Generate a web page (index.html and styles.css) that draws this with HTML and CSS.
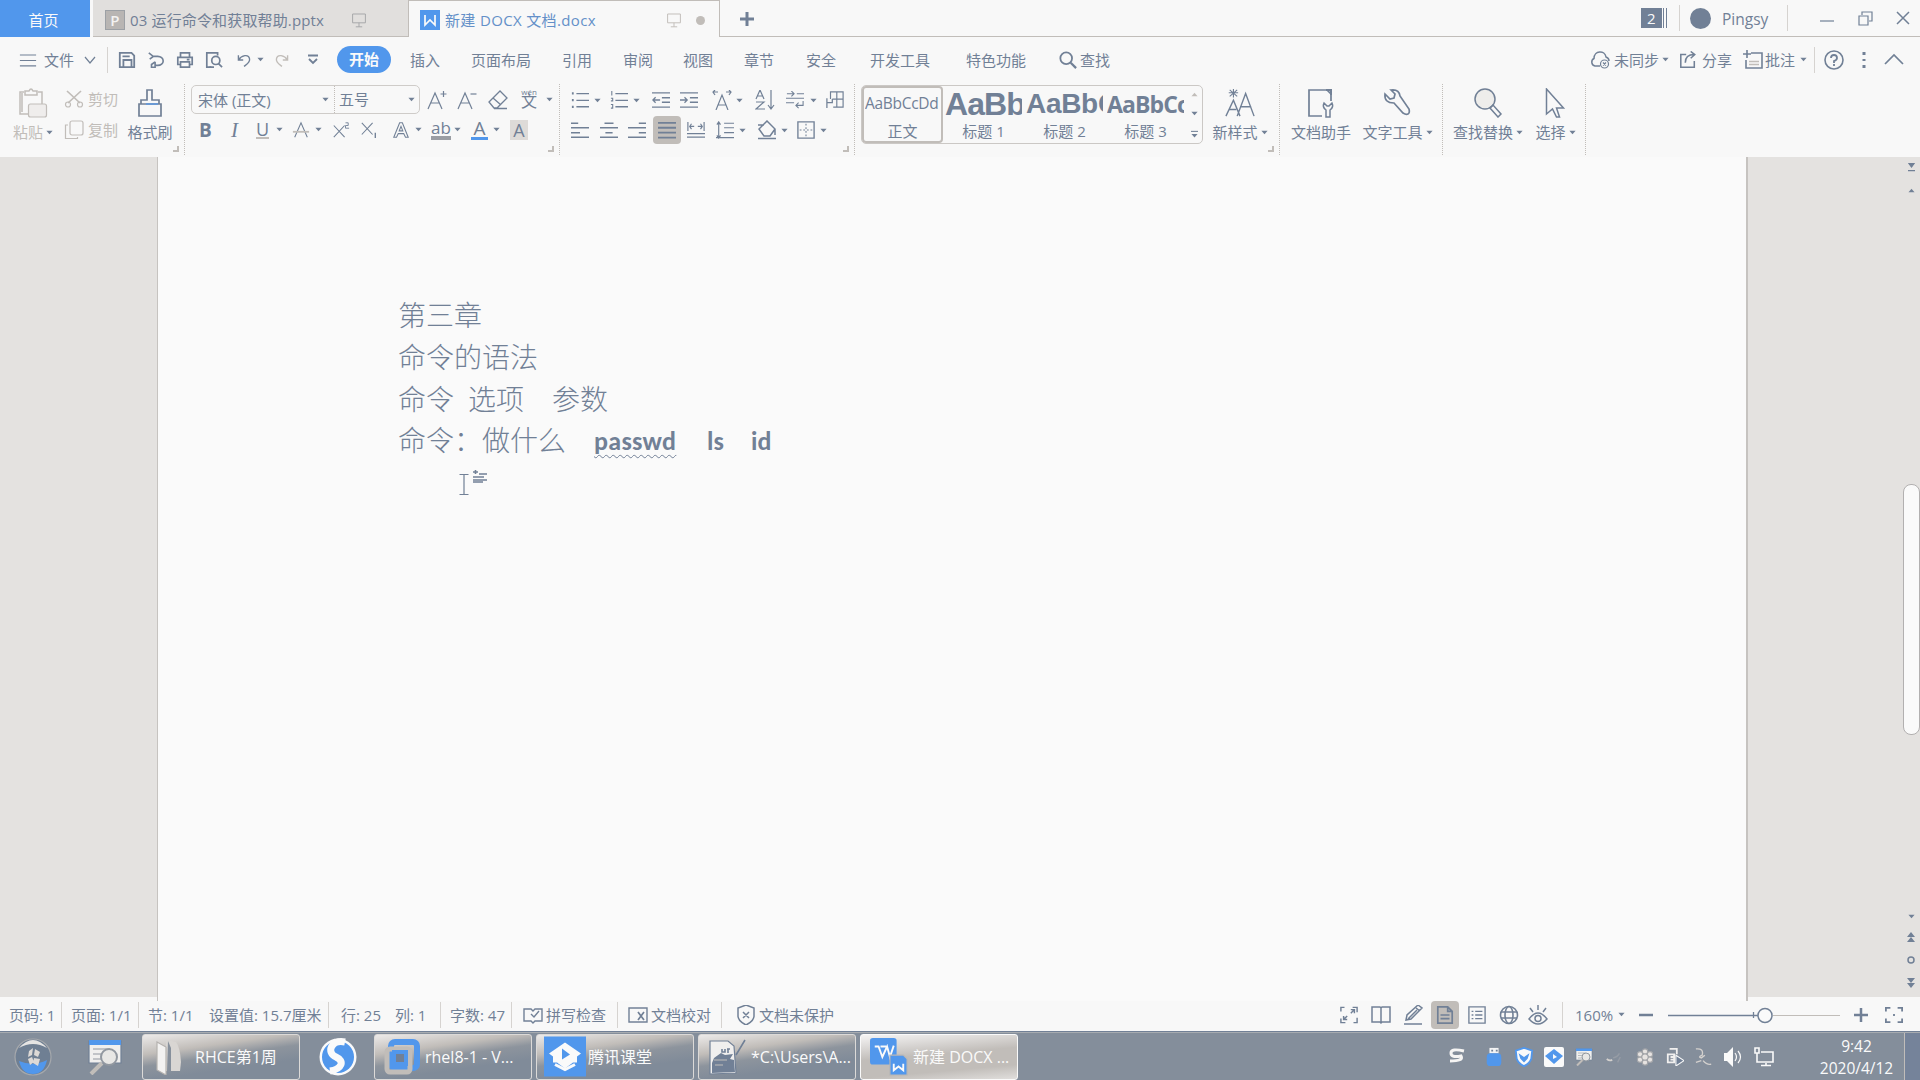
FILE: index.html
```html
<!DOCTYPE html>
<html lang="zh-CN">
<head>
<meta charset="utf-8">
<title>新建 DOCX 文档.docx</title>
<link rel="stylesheet" href="styles.css">
</head>
<body>
<svg class="defs" aria-hidden="true">
  <symbol id="caret" viewBox="0 0 8 5"><path d="M.5.5h7L4 4.5z" fill="currentColor" stroke="none"/></symbol>
  <symbol id="up" viewBox="0 0 8 5"><path d="M.5 4.5h7L4 .5z" fill="currentColor" stroke="none"/></symbol>
  <symbol id="monitor" viewBox="0 0 20 20"><path d="M2 2.500h16v11H2zM10 13.500v5M6 18.500h8"/></symbol>
  <symbol id="menu" viewBox="0 0 20 20"><path d="M1 4.500h18M1 10.500h18M1 16.500h18"/></symbol>
  <symbol id="chev" viewBox="0 0 12 8"><path d="M1 1l5 6 5-6"/></symbol>
  <symbol id="save" viewBox="0 0 20 20"><path d="M2 2h13l3 3v13H2zM6 18v-8h9v8M5 6h8" stroke-width="2"/></symbol>
  <symbol id="pdf" viewBox="0 0 20 20"><path d="M2 2l5 4-4 3M6 6h6a6 5 0 0 1 0 10H9v-4M9 12l-4 3v3h4v-3" stroke-width="1.800"/></symbol>
  <symbol id="print" viewBox="0 0 20 20"><path d="M5 7V2h10v5M5 15H2V7h16v8h-3M5 12h10v6H5zM12 9.500h3" stroke-width="1.900"/></symbol>
  <symbol id="preview" viewBox="0 0 20 20"><path d="M7 18H2V2h12v3" stroke-width="1.900"/><circle cx="12" cy="10.500" r="4.500" stroke-width="1.900"/><path d="M15 14l4 4M5 18h5" stroke-width="1.900"/></symbol>
  <symbol id="undo" viewBox="0 0 18 20"><path d="M2 4v6h6M2 10C6 4 15 2 16 9c.5 4-3 6-7 9" stroke-width="1.700"/></symbol>
  <symbol id="redo" viewBox="0 0 18 20"><path d="M16 4v6h-6M16 10C12 4 3 2 2 9c-.5 4 3 6 7 9" stroke-width="1.700"/></symbol>
  <symbol id="more" viewBox="0 0 10 12"><path d="M0 1.500h10M1 5l4 4 4-4" stroke-width="1.800"/></symbol>
  <symbol id="search" viewBox="0 0 20 20"><circle cx="8" cy="8" r="6.500" stroke-width="2"/><path d="M13 13l6 6" stroke-width="2.500"/></symbol>
  <symbol id="cloud" viewBox="0 0 20 20"><path d="M10 16H5a4 4 0 0 1-1-7.500C4 0 15 0 16 7q3 1 3 4" stroke-width="1.500"/><circle cx="14.500" cy="14" r="4"/><path d="M13 12.500l3 3m0-3l-3 3"/></symbol>
  <symbol id="share" viewBox="0 0 20 20"><path d="M8 4H2v14h15v-7M7 13c0-6 3-9 10-9M13 .5L17.500 4 13 8" stroke-width="1.700"/></symbol>
  <symbol id="note" viewBox="0 0 20 20"><path d="M8 3h11v15H3v-8M4 0v8M0 4h8" stroke-width="1.600"/><path d="M6 11.500h10M6 14.500h10" stroke="#c1bdb9" stroke-width="1.500"/></symbol>
  <symbol id="help" viewBox="0 0 20 20"><circle cx="10" cy="10" r="9" stroke-width="1.600"/><path d="M7 8q0-3 3-3t3 3q0 2-3 3v2M10 14v2" stroke-width="1.800"/></symbol>
  <symbol id="paste" viewBox="0 0 30 30"><path d="M10 26H2V4h4M20 4h4v12M7 3h4q2-4 4 0h4v4H7z" stroke-width="1.500"/><path d="M4 5v19" stroke-width="1.500"/><rect x="10.500" y="16" width="18" height="13" rx="2" fill="#efedec"/></symbol>
  <symbol id="cut" viewBox="0 0 20 20"><path d="M3 2l13 12M17 2L4 14" stroke-width="1.700"/><circle cx="4" cy="15.500" r="2.500"/><circle cx="16" cy="15.500" r="2.500"/></symbol>
  <symbol id="copy" viewBox="0 0 20 20"><rect x="6" y="1" width="13" height="14" rx="2"/><path d="M4 5H1.500v13.500h12V17"/></symbol>
  <symbol id="brush" viewBox="0 0 26 30"><path d="M2 16h22v12H2zM4 16v-4h6V2h5v10h7v4" stroke-width="1.700"/><path d="M9 16h12" stroke="#5197ec"/></symbol>
  <symbol id="corner" viewBox="0 0 6 6"><path d="M5 0v5H0" stroke="#c1bdb9" stroke-width="2"/></symbol>
  <symbol id="Aplus" viewBox="0 0 20 20"><path d="M1 19L8 3l7 16M4 13h8"/><path d="M13.500 4h6M16.500 1v6"/></symbol>
  <symbol id="Aminus" viewBox="0 0 20 20"><path d="M1 19L8 3l7 16M4 13h8"/><path d="M13.500 4h6"/></symbol>
  <symbol id="eraser" viewBox="0 0 20 20"><path d="M1 12L12 1l7 7-10 10H6zM5 8l8 7M6 18.500h13" stroke-width="1.300"/></symbol>
  <symbol id="strikeA" viewBox="0 0 18 20"><path d="M2 18L9 2l7 16"/><path d="M0 12h18" stroke="#c1bdb9" stroke-width="2"/></symbol>
  <symbol id="xsup" viewBox="0 0 18 20"><path d="M1 5l12 13M13 5L1 18"/><path d="M14 2h3v3h-3v3h4" stroke-width="1"/></symbol>
  <symbol id="xsub" viewBox="0 0 18 20"><path d="M1 2l12 13M13 2L1 15"/><path d="M16 13v6" stroke-width="1.500"/></symbol>
  <symbol id="outA" viewBox="0 0 18 20"><path d="M1 18L7.500 2h3L17 18h-3l-2-4H6l-2 4zM7 11h4L9 6z"/></symbol>
  <symbol id="bul" viewBox="0 0 20 20"><path d="M1 2.500h2M1 10h2M1 17.500h2" stroke-width="2.500"/><path d="M6 3h14M6 10.500h14M6 17.500h14" stroke-width="1.400"/></symbol>
  <symbol id="num" viewBox="0 0 20 20"><path d="M2 0v5M1 8h2v3H1M1 15h2v4H1"/><path d="M6 3h14M6 10.500h14M6 17.500h14" stroke-width="1.400"/></symbol>
  <symbol id="outd" viewBox="0 0 20 20"><path d="M0 2h20M11 7.500h9M11 12.500h9M0 18h20M1 10h8M4 7l-3 3 3 3" stroke-width="1.400"/></symbol>
  <symbol id="ind" viewBox="0 0 20 20"><path d="M0 2h20M11 7.500h9M11 12.500h9M0 18h20M0 10h8M5 7l3 3-3 3" stroke-width="1.400"/></symbol>
  <symbol id="Aw" viewBox="0 0 20 20"><path d="M4 20l6-15 6 15M6 15h8M6 2H1m2-2L1 2l2 3M14 2h5m-2-2l2 2-2 3"/></symbol>
  <symbol id="az" viewBox="0 0 20 20"><path d="M1 9l4-9 4 9M2 6h6M1 12h8l-8 7h9M16 0v19M13 15l3 4 3-4"/></symbol>
  <symbol id="wrap" viewBox="0 0 20 20"><path d="M1 3h8M6 0l3 3-3 3M12 3h8M0 8h20M0 13h9M12 16h7v-5M14 13l-3 3 3 3" stroke-width="1.200"/></symbol>
  <symbol id="table" viewBox="0 0 20 20"><path d="M5 9V1h14v17H8M12 1v17M7 9h12" stroke-width="1.300"/><path d="M1 19V8M1 13h6V9" stroke-width="1.400"/></symbol>
  <symbol id="al" viewBox="0 0 20 20"><path d="M0 2.500h8M0 7.500h20M0 13h10M0 18h20" stroke-width="1.500"/></symbol>
  <symbol id="ac" viewBox="0 0 20 20"><path d="M5 2.500h10M0 7.500h20M6 13h8M0 18h20" stroke-width="1.500"/></symbol>
  <symbol id="ar" viewBox="0 0 20 20"><path d="M12 2.500h8M0 7.500h20M12 13h8M0 18h20" stroke-width="1.500"/></symbol>
  <symbol id="aj" viewBox="0 0 20 20"><path d="M0 2h20M0 7.500h20M0 13h20M0 18.500h20" stroke-width="2"/></symbol>
  <symbol id="dist" viewBox="0 0 20 20"><path d="M1 1v10M19 1v10M3 6h5M5 3L3 6l2 3M17 6h-5M15 3l2 3-2 3M0 14h20M0 18h20" stroke-width="1.300"/></symbol>
  <symbol id="ls" viewBox="0 0 20 20"><path d="M3 1v18M1 4l2-3 2 3M1 16l2 3 2-3M9 2.500h11M9 7.500h11M9 13h11M0 18.500h20" stroke-width="1.300"/></symbol>
  <symbol id="fill" viewBox="0 0 20 20"><path d="M10 1l8 8-5 7H7L2 9zM1 5h6M1 18.500h18M18 9v6" stroke-width="1.500"/></symbol>
  <symbol id="border" viewBox="0 0 20 20"><path d="M1 1h18v18H1z" stroke-width="1.500"/><path d="M10 3v14M3 10h14" stroke-dasharray="2 2"/></symbol>
  <symbol id="newstyle" viewBox="0 0 32 30"><path d="M1 29l8-17 7 17M4 22h8M13 29L22 5l9 24M16 19h12" stroke-width="1.500"/><path d="M4 4h10M9 0v9M5 1l8 7M13 1L5 8"/></symbol>
  <symbol id="dochelp" viewBox="0 0 28 30"><path d="M15 28H2V2h18l4 4v7" stroke-width="1.700"/><path d="M19 29v-7q-4-3-2-7l3 3h2l3-3q2 4-2 7v7z" stroke-width="1.500"/><path d="M19 2h5v5" stroke-width="2"/></symbol>
  <symbol id="wrench" viewBox="0 0 28 30"><path d="M2 6l5 5 4-1 1-4-4-4q8-1 9 6l9 13q1 4-1 5t-5-1L11 15Q1 15 2 6z" stroke-width="1.700"/></symbol>
  <symbol id="find" viewBox="0 0 28 30"><circle cx="11" cy="11" r="10" fill="#eeedeb" stroke-width="1.500"/><path d="M16 20l3-3 8 9-3 3z" stroke-width="1.500"/></symbol>
  <symbol id="select" viewBox="0 0 20 30"><path d="M1.500 1v25l6-5 4 8h3l-3-9h7z" stroke-width="1.500"/></symbol>
  <symbol id="spell" viewBox="0 0 20 20"><path d="M1 4h7l2 2 2-2h7v12h-7l-2 2-2-2H1zM8 9l3 3 5-6" stroke-width="1.400"/></symbol>
  <symbol id="proof" viewBox="0 0 20 20"><path d="M10 3H1v14h9M10 3h9v14h-9" stroke-width="1.400"/><path d="M10 7l6 8M16 7l-6 8" stroke-width="1.700"/></symbol>
  <symbol id="shield" viewBox="0 0 20 20"><path d="M10 0l8 3v8q0 5-8 9-8-4-8-9V3zM7 7l6 6M13 7l-6 6" stroke-width="1.500"/></symbol>
  <symbol id="expand" viewBox="0 0 20 20"><path d="M1 6V1.500h4M14 1.500h5V7M19 13v5.500h-4M6 18.500H1V14M4 15l4-4M12 8l4-4M12 4h4v4M4 11v4h4" stroke-width="1.600"/></symbol>
  <symbol id="book" viewBox="0 0 20 20"><path d="M1 2h8l1 1 1-1h8v15h-8l-1 1-1-1H1zM10 3v15" stroke-width="1.500"/></symbol>
  <symbol id="pencil" viewBox="0 0 20 20"><path d="M3 15l1-5L15 0l4 3L8 14zM13 3l4 3M1 19h18M5 14l9-9" stroke-width="1.500"/></symbol>
  <symbol id="page" viewBox="0 0 20 20"><path d="M2 1h11l5 5v13H2zM13 1v5h5M5 10h10M5 14h10" stroke-width="1.900"/></symbol>
  <symbol id="list" viewBox="0 0 20 20"><path d="M1 1h18v18H1zM4 6h2M8 6h8M4 10h2M8 10h8M4 14h2M8 14h8" stroke-width="1.500"/></symbol>
  <symbol id="globe" viewBox="0 0 20 20"><g stroke-width="1.600"><circle cx="10" cy="10" r="8.500"/><ellipse cx="10" cy="10" rx="4" ry="8.500"/><path d="M2 7h16M2 13h16"/></g></symbol>
  <symbol id="eye" viewBox="0 0 20 20"><path d="M1 14q9-12 18 0-9 10-18 0zM10 0v5M2 3l3 4M18 3l-3 4" stroke-width="1.500"/><circle cx="10" cy="13.500" r="3" stroke-width="1.500"/></symbol>
  <symbol id="fit" viewBox="0 0 20 20"><path d="M1 6V2h5M14 2h5v4M19 14v4h-5M6 18H1v-4M9 10h2" stroke-width="2"/></symbol>
  <symbol id="wps" viewBox="0 0 20 20"><path d="M0 0h20v20H0z" fill="#5197ec" stroke="none"/><path d="M5 5v10l5-5 5 5V5" stroke="#fafafa" stroke-width="1.700"/></symbol>
  <symbol id="orb" viewBox="0 0 40 38"><circle cx="20" cy="19" r="18" fill="#6f7f93" stroke="#a5a8ac"/><path d="M6 23q14 6 28-1-3 14-14 14T6 23z" fill="#5197ec" stroke="none"/><path d="M6 10Q20-6 34 10 20 2 6 10z" fill="#e5e4e3" stroke="none"/><path d="M16 13l4-3-1 7-4 2zM22 11l5 3-2 5-4-2zM15 21l4-2 2 5-4 3zM21 20l6 1-2 7-5-3z" fill="#ddd9d6" stroke="none"/></symbol>
  <symbol id="scan" viewBox="0 0 34 36"><path d="M1 2h32v22H1z" fill="#f0efee" stroke="#718096"/><path d="M1 1h32v5H1z" fill="#5197ec" stroke="none"/><path d="M5 10h15M5 15h10M5 20h10" stroke="#9298a0"/><circle cx="21" cy="18" r="8" fill="#e8e7e5" stroke="#9298a0" stroke-width="2"/><path d="M14 24L3 35" stroke="#c1bdb9" stroke-width="4"/></symbol>
  <symbol id="folder" viewBox="0 0 28 36"><path d="M10 1l10 2q4 5 5 20l-1 9H10z" fill="#d9d6d3" stroke="none"/><path d="M1 3l9 5v28l-9-5z" fill="#f3f2f1" stroke="#b5b2af"/><path d="M12 2l3 7v23h-4z" fill="#87909c" stroke="none"/></symbol>
  <symbol id="sogou" viewBox="0 0 38 38"><circle cx="19" cy="19" r="18.500" fill="#fafafa" stroke="none"/><circle cx="19" cy="19" r="16" fill="#5197ec" stroke="none"/><path d="M26 4C12 1 7 15 17 19c9 4 6 12-6 14" stroke="#fafafa" stroke-width="7"/></symbol>
  <symbol id="vm" viewBox="0 0 36 36"><rect x="7" y="3" width="26" height="26" rx="4" stroke="#5197ec" stroke-width="6"/><rect x="3" y="10" width="23" height="23" rx="3" stroke="#c1bdb9" stroke-width="5"/><path d="M10 13h12v12H10z" fill="#718096" stroke="#5197ec" stroke-width="4"/></symbol>
  <symbol id="ke" viewBox="0 0 42 40"><path d="M0 0h42v40H0z" fill="#5197ec" stroke="none"/><path d="M21 6l16 11-4 3v6h-4l-8 6-8-6H9v-6l-4-3z" fill="#fafafa" stroke="none"/><path d="M18 12v11l8-5z" fill="#5197ec" stroke="none"/><path d="M11 28l10 5 10-5" stroke="#fafafa" stroke-width="3"/></symbol>
  <symbol id="notepad" viewBox="0 0 38 36"><path d="M2 2h18l6 5 2 27-26 1z" fill="#f0efee" stroke="#718096"/><path d="M4 24l2-5 7-5 4 2 8-1-3 5 4 1 1 12-23 1z" fill="#718096" stroke="none"/><path d="M6 21h13M7 26h8" stroke="#c1bdb9"/><path d="M37 1L28 16M14 10v3h3v-3M19 10h3M20 10v4" stroke="#718096" stroke-width="1.600"/></symbol>
  <symbol id="wpsdoc" viewBox="0 0 40 40"><rect width="28" height="28" rx="3" fill="#5197ec" stroke="none"/><path d="M5 9h4l4 11 5-11 3 11 4-12M11 9h6" stroke="#fafafa" stroke-width="2"/><path d="M21 18h14l4 4v17H21z" fill="#5197ec" stroke="#b9b7b5"/><path d="M25 27v7l5-4 5 4v-7" stroke="#fafafa" stroke-width="2"/></symbol>
  <symbol id="tS" viewBox="0 0 20 20"><path d="M17 4Q4 1 4 6t10 3q3 5-11 5" stroke="#f5f4f3" stroke-width="3"/></symbol>
  <symbol id="usb" viewBox="0 0 20 22"><path d="M5 1h10v6H5z" fill="#f4f4f4" stroke="none"/><path d="M7 3h2v2H7zM12 3h2v2h-2z" fill="#718096" stroke="none"/><rect x="2" y="7" width="16" height="14" rx="4" fill="#5197ec" stroke="none"/></symbol>
  <symbol id="tsh" viewBox="0 0 20 22"><path d="M10 1l9 3-1 9q-2 5-8 8-6-3-8-8L1 4z" fill="#fafafa" stroke="#5197ec" stroke-width="2"/><path d="M4 7l6 4 6-4-2 6-4 4-4-4z" fill="#5197ec" stroke="none"/></symbol>
  <symbol id="tke" viewBox="0 0 20 20"><rect width="20" height="20" rx="2" fill="#fafafa" stroke="none"/><path d="M10 2l9 7-9 8-9-8z" fill="#5197ec" stroke="none"/><path d="M9 7v5l4-2z" fill="#fafafa" stroke="none"/></symbol>
  <symbol id="bird" viewBox="0 0 20 20"><path d="M2 12q3 3 6 1" stroke="#d4d1ce" stroke-width="2"/><path d="M9 11q5-1 7-5M14 16l3-6" stroke="#969ca5" stroke-width="1.500"/></symbol>
  <symbol id="flower" viewBox="0 0 20 20"><g fill="#e6e3e1" stroke="#a3a5a9"><circle cx="10" cy="4" r="3"/><circle cx="15.500" cy="7" r="3"/><circle cx="15.500" cy="13" r="3"/><circle cx="10" cy="16" r="3"/><circle cx="4.500" cy="13" r="3"/><circle cx="4.500" cy="7" r="3"/><circle cx="10" cy="10" r="3.500"/></g></symbol>
  <symbol id="copyplay" viewBox="0 0 20 20"><path d="M4 1h8v6M2 7h7v9H2zM5 10h3M5 13h3" stroke="#f1f0ef" stroke-width="2"/><path d="M11 8l9 6-9 6z" fill="#718096" stroke="#fafafa"/></symbol>
  <symbol id="pointer" viewBox="0 0 20 20"><path d="M1 1q9-1 7 7-5 2-1 3l4-3M1 16l6-2M9 14q4 5 9 4" stroke="#d4d1ce" stroke-width="1.500"/></symbol>
  <symbol id="vol" viewBox="0 0 20 20"><path d="M1 6h3l6-6v20l-6-6H1z" fill="#fafafa" stroke="none"/><path d="M12 6q3 4 0 8M15 4q5 6 0 12" stroke="#fafafa"/></symbol>
  <symbol id="net" viewBox="0 0 20 20"><path d="M7 5h12v10H7M12 16v2M7 18.500h10M1 1h4v5H1zM3 6v9h4" stroke="#fafafa" stroke-width="1.600"/></symbol>
</svg>

<header class="tabs">
  <div class="home">首页</div>
  <div class="tab tab-ppt"><span class="pbox">P</span><span>03 运行命令和获取帮助.pptx</span><svg class="i16"><use href="#monitor"/></svg></div>
  <div class="tab tab-doc"><svg class="i20"><use href="#wps"/></svg><span class="blue">新建 DOCX 文档.docx</span><svg class="i16 dim"><use href="#monitor"/></svg><span class="dot"></span></div>
  <div class="titlebar">
    <svg class="plus" viewBox="0 0 16 16"><path d="M8 1v14M1 8h14" stroke-width="3"/></svg>
    <span class="count">2</span><i class="vsep"></i><span class="avatar"></span><span class="user">Pingsy</span><i class="vsep"></i>
    <svg class="i14" viewBox="0 0 14 14"><path d="M0 10h14"/></svg>
    <svg class="i15" viewBox="0 0 15 15"><path d="M1 5h9v9H1zM4 4V1h10v9h-3"/></svg>
    <svg class="i14" viewBox="0 0 14 14"><path d="M1 1l12 12M13 1L1 13" stroke-width="1.500"/></svg>
  </div>
</header>

<nav class="menu">
  <svg class="i18"><use href="#menu"/></svg><span>文件</span><svg class="chev"><use href="#chev"/></svg><i class="vsep"></i>
  <svg class="i18"><use href="#save"/></svg><svg class="i18"><use href="#pdf"/></svg><svg class="i18"><use href="#print"/></svg><svg class="i18"><use href="#preview"/></svg><svg class="i16"><use href="#undo"/></svg><svg class="caret"><use href="#caret"/></svg><svg class="i16 dim"><use href="#redo"/></svg><svg class="more"><use href="#more"/></svg>
  <span class="pill">开始</span><span>插入</span><span>页面布局</span><span>引用</span><span>审阅</span><span>视图</span><span>章节</span><span>安全</span><span>开发工具</span><span>特色功能</span><svg class="i18"><use href="#search"/></svg><span>查找</span>
  <svg class="i20"><use href="#cloud"/></svg><span>未同步</span><svg class="caret"><use href="#caret"/></svg><svg class="i18"><use href="#share"/></svg><span>分享</span><svg class="i20"><use href="#note"/></svg><span>批注</span><svg class="caret"><use href="#caret"/></svg><i class="vsep"></i><svg class="i20"><use href="#help"/></svg>
  <svg class="dots" viewBox="0 0 4 16"><path d="M2 0v3M2 7v2M2 13v3" stroke-width="3"/></svg><svg class="i20" viewBox="0 0 20 20"><path d="M1 14l9-9 9 9" stroke-width="1.700"/></svg>
</nav>

<section class="ribbon">
  <div class="group clip">
    <div class="big dim"><svg class="i30"><use href="#paste"/></svg><span>粘贴<svg class="caret dark"><use href="#caret"/></svg></span></div>
    <div class="stack dim"><span><svg class="i20"><use href="#cut"/></svg>剪切</span><span><svg class="i20"><use href="#copy"/></svg>复制</span></div>
    <div class="big"><svg class="i30"><use href="#brush"/></svg><span>格式刷</span></div>
    <svg class="corner"><use href="#corner"/></svg>
  </div>
  <div class="group font">
    <div class="frow1">
      <div class="combo"><span>宋体 (正文)</span><svg class="caret"><use href="#caret"/></svg><span class="size">五号</span><svg class="caret"><use href="#caret"/></svg></div>
      <svg class="i20"><use href="#Aplus"/></svg><svg class="i20"><use href="#Aminus"/></svg><svg class="i20"><use href="#eraser"/></svg><span class="pinyin"><small>wén</small><span>文</span></span><svg class="caret"><use href="#caret"/></svg>
    </div>
    <div class="frow2">
      <b class="g">B</b><span class="g it">I</span><span class="g un">U</span><svg class="caret"><use href="#caret"/></svg><svg class="i18"><use href="#strikeA"/></svg><svg class="caret"><use href="#caret"/></svg><svg class="i18"><use href="#xsup"/></svg><svg class="i18"><use href="#xsub"/></svg><svg class="i18"><use href="#outA"/></svg><svg class="caret"><use href="#caret"/></svg><span class="g ab">ab</span><svg class="caret"><use href="#caret"/></svg><span class="g color">A</span><svg class="caret"><use href="#caret"/></svg><span class="g shade">A</span>
    </div>
    <svg class="corner"><use href="#corner"/></svg>
  </div>
  <div class="group para">
    <div class="prow1">
      <svg class="i18"><use href="#bul"/></svg><svg class="caret"><use href="#caret"/></svg><svg class="i18"><use href="#num"/></svg><svg class="caret"><use href="#caret"/></svg><svg class="i18"><use href="#outd"/></svg><svg class="i18"><use href="#ind"/></svg><svg class="i20"><use href="#Aw"/></svg><svg class="caret"><use href="#caret"/></svg><svg class="i20"><use href="#az"/></svg><svg class="i18"><use href="#wrap"/></svg><svg class="caret"><use href="#caret"/></svg><svg class="i18"><use href="#table"/></svg>
    </div>
    <div class="prow2">
      <svg class="i18"><use href="#al"/></svg><svg class="i18"><use href="#ac"/></svg><svg class="i18"><use href="#ar"/></svg><span class="on"><svg class="i18"><use href="#aj"/></svg></span><svg class="i18"><use href="#dist"/></svg><svg class="i18"><use href="#ls"/></svg><svg class="caret"><use href="#caret"/></svg><svg class="i20"><use href="#fill"/></svg><svg class="caret"><use href="#caret"/></svg><svg class="i18"><use href="#border"/></svg><svg class="caret"><use href="#caret"/></svg>
    </div>
    <svg class="corner"><use href="#corner"/></svg>
  </div>
  <div class="group styles">
    <div class="gallery">
      <div class="style sel"><span class="pv p0">AaBbCcDd</span><span>正文</span></div>
      <div class="style"><span class="pv p1">AaBb</span><span>标题 1</span></div>
      <div class="style"><span class="pv p2">AaBbC</span><span>标题 2</span></div>
      <div class="style"><span class="pv p3">AaBbCc</span><span>标题 3</span></div>
      <div class="scrolls"><svg class="caret dim"><use href="#up"/></svg><svg class="caret"><use href="#caret"/></svg><svg class="caret drop" viewBox="0 0 8 8"><path d="M0 1h8"/><path d="M.5 4h7L4 8z" fill="currentColor" stroke="none"/></svg></div>
    </div>
    <div class="big"><svg class="i30"><use href="#newstyle"/></svg><span>新样式<svg class="caret"><use href="#caret"/></svg></span></div>
    <svg class="corner"><use href="#corner"/></svg>
  </div>
  <div class="group tools">
    <div class="big"><svg class="i30"><use href="#dochelp"/></svg><span>文档助手</span></div>
    <div class="big"><svg class="i30"><use href="#wrench"/></svg><span>文字工具<svg class="caret"><use href="#caret"/></svg></span></div>
  </div>
  <div class="group edit">
    <div class="big"><svg class="i30"><use href="#find"/></svg><span>查找替换<svg class="caret"><use href="#caret"/></svg></span></div>
    <div class="big"><svg class="i30"><use href="#select"/></svg><span>选择<svg class="caret"><use href="#caret"/></svg></span></div>
  </div>
</section>

<main class="work">
  <article class="paper">
    <p>第三章</p>
    <p>命令的语法</p>
    <p><span class="w70">命令</span><span class="w84">选项</span>参数</p>
    <p><span class="w84">命令：</span><span class="w112">做什么</span><b class="pw">passwd</b><b class="lsw">ls</b><b>id</b></p>
    <svg class="ibeam" viewBox="0 0 30 28"><path d="M.5 5.500h9M.5 25.500h9M5 5.500v20"/><path d="M14 3h5M16.500 1v4M20 5h8M14 8h11M14 11h14M14 13h10" stroke-width="1.600"/></svg>
  </article>
  <aside class="scroll">
    <svg class="caret top1" viewBox="0 0 8 10"><path d="M1 0h6L4 4zM0 8h8" fill="currentColor"/></svg>
    <svg class="caret top2"><use href="#up"/></svg>
    <div class="thumb"></div>
    <svg class="caret dn"><use href="#caret"/></svg>
    <svg class="nav" viewBox="0 0 8 10"><path d="M0 5l4-5 4 5zM0 10l4-5 4 5z" fill="currentColor" stroke="none"/></svg>
    <svg class="nav" viewBox="0 0 8 10"><circle cx="4" cy="5" r="3" stroke-width="1.500"/></svg>
    <svg class="nav" viewBox="0 0 8 10"><path d="M0 0l4 5 4-5zM0 5l4 5 4-5z" fill="currentColor" stroke="none"/></svg>
  </aside>
</main>

<footer class="status">
  <span>页码: 1</span><i class="vsep"></i><span>页面: 1/1</span><i class="vsep"></i><span>节: 1/1</span><span>设置值: 15.7厘米</span><i class="vsep"></i><span>行: 25</span><span>列: 1</span><i class="vsep"></i><span>字数: 47</span><i class="vsep"></i><svg class="i20"><use href="#spell"/></svg><span>拼写检查</span><i class="vsep"></i><svg class="i20"><use href="#proof"/></svg><span>文档校对</span><i class="vsep"></i><svg class="i20"><use href="#shield"/></svg><span>文档未保护</span>
  <svg class="i18"><use href="#expand"/></svg><svg class="i20"><use href="#book"/></svg><svg class="i20"><use href="#pencil"/></svg><span class="on"><svg class="i18"><use href="#page"/></svg></span><svg class="i18"><use href="#list"/></svg><svg class="i20"><use href="#globe"/></svg><svg class="i20"><use href="#eye"/></svg><i class="vsep"></i><span>160%</span><svg class="caret"><use href="#caret"/></svg>
  <svg class="i16" viewBox="0 0 16 16"><path d="M1 8h14" stroke-width="2.500"/></svg>
  <svg class="slider" viewBox="0 0 172 20"><path d="M0 10.500h90M85.500 7v6" stroke-width="1.300"/><path d="M105 10.500h67" stroke="#c1bdb9"/><circle cx="97" cy="10.500" r="7" fill="#fafafa" stroke-width="1.500"/></svg>
  <svg class="i16" viewBox="0 0 16 16"><path d="M1 8h14M8 1v14" stroke-width="2.500"/></svg><svg class="i18"><use href="#fit"/></svg>
</footer>

<div class="taskbar">
  <svg class="s40"><use href="#orb"/></svg>
  <svg class="s36"><use href="#scan"/></svg>
  <div class="task"><svg class="s36"><use href="#folder"/></svg><span class="rhce">RHCE第1周</span></div>
  <svg class="s40"><use href="#sogou"/></svg>
  <div class="task"><svg class="s36"><use href="#vm"/></svg><span>rhel8-1 - V...</span></div>
  <div class="task ke"><svg class="s42"><use href="#ke"/></svg><span>腾讯课堂</span></div>
  <div class="task"><svg class="s38"><use href="#notepad"/></svg><span>*C:\Users\A...</span></div>
  <div class="task active"><svg class="s38"><use href="#wpsdoc"/></svg><span>新建 DOCX ...</span></div>
  <div class="tray"><svg class="i20"><use href="#tS"/></svg><svg class="i20"><use href="#usb"/></svg><svg class="i20"><use href="#tsh"/></svg><svg class="i20"><use href="#tke"/></svg><svg class="i18"><use href="#scan"/></svg><svg class="i18"><use href="#bird"/></svg><svg class="i18"><use href="#flower"/></svg><svg class="i18"><use href="#copyplay"/></svg><svg class="i18"><use href="#pointer"/></svg><svg class="i20"><use href="#vol"/></svg><svg class="i20"><use href="#net"/></svg></div>
  <div class="clock"><span>9:42</span><span>2020/4/12</span></div>
  <div class="peek"></div>
</div>
</body>
</html>
```
FILE: styles.css
```css
* { box-sizing: border-box; }
body {
  margin: 0; width: 1920px; height: 1080px; overflow: hidden;
  display: grid; grid-template-rows: 37px 43px 77px 840px 35px 48px;
  font: 15px/20px "Open Sans", "Noto Sans CJK SC", sans-serif;
  color: #718096; background: #f8f8f8; white-space: nowrap;
}
.defs { position: absolute; width: 0; height: 0; }
svg { display: block; flex: none; fill: none; stroke: currentColor; stroke-width: 1.2; }
.dim { color: #c1bdb9; }
.dark { color: #718096; }
.blue { color: #6490c8; }
.i14 { width: 14px; height: 14px; }
.i15 { width: 15px; height: 15px; }
.i16 { width: 16px; height: 16px; }
.i18 { width: 18px; height: 18px; }
.i20 { width: 20px; height: 20px; }
.i30 { width: 30px; height: 30px; }
.caret { width: 7px; height: 5px; }
.chev { width: 12px; height: 8px; }
.more { width: 10px; height: 12px; }
.drop { height: 8px; }
.dots { width: 4px; height: 16px; margin-left: 2px; }
.vsep { width: 1px; height: 26px; background: #d6d3d0; flex: none; }

/* Document tabs and window controls */
.tabs { display: grid; grid-template-columns: 90px 3px 315px 312px 1fr; align-items: stretch; }
.home { background: #5197ec; color: #fafafa; display: flex; align-items: center; justify-content: center; padding: 2px 3px 0 0; }
.tab { display: flex; align-items: center; }
.tab-ppt { grid-column: 3; background: #e1dfdd; border-bottom: 1px solid #c1bdb9; padding: 4px 0 0 12px; gap: 5px; letter-spacing: .15px; }
.tab-ppt > span:nth-child(2) { width: 216px; }
.tab-ppt > svg { color: #a5a6a8; }
.pbox { width: 20px; height: 20px; background: #b8b5b3; border: 1px solid #9ca0a5; color: #f3f2f1; line-height: 18px; text-align: center; font-weight: 600; }
.tab-doc { border: 1px solid #c1bdb9; border-bottom: 0; padding: 2px 0 0 11px; gap: 5px; letter-spacing: .35px; }
.tab-doc > span:nth-child(2) { width: 216px; }
.dot { width: 9px; height: 9px; border-radius: 50%; background: #c1bdb9; margin-left: 9px; }
.titlebar { border-bottom: 1px solid #c1bdb9; display: grid; align-items: center; grid-template-columns: 902px 38px 11px 32px 65px 33px 38px 38px 20px; padding-left: 19px; }
.plus { width: 16px; height: 16px; margin-top: 2px; }
.count { width: 27px; height: 20px; background: linear-gradient(90deg, #718096 21px, #fafafa 21px 22px, #718096 22px 23px, #fafafa 23px 25px, #718096 25px 26px, #fafafa 26px); color: #fafafa; padding-left: 6px; line-height: 20px; }
.avatar { width: 21px; height: 21px; border-radius: 50%; background: #718096; }
.user { padding-top: 2px; font-size: 15.5px; }

/* Quick access bar and ribbon tabs */
.menu { display: grid; align-items: center; padding: 2px 0 0 19px;
  grid-template-columns: 25px 40px 23px 11px 29px 29px 29px 31px 21px 17px 34px 29px 73px 61px 91px 61px 60px 61px 62px 64px 96px 93px 21px 510px 24px 48px 17px 23px 41px 22px 35px 14px 10px 36px 24px 20px; }
.pill { width: 54px; height: 27px; border-radius: 14px; background: #5197ec; color: #fafafa; font-weight: 700; text-align: center; line-height: 26px; }

/* Ribbon */
.ribbon { display: grid; grid-template-columns: 185px 375px 295px 425px 163px 143px; }
.group { position: relative; border-right: 1px dotted #c1bdb9; margin: 4px 0 2px; padding-top: 4px; }
.corner { position: absolute; right: 5px; bottom: 3px; width: 6px; height: 6px; }
.big { display: flex; flex-direction: column; align-items: center; gap: 4px; }
.big > span { display: flex; align-items: center; gap: 3px; }
.clip { display: grid; grid-template-columns: 64px 54px 64px; }
.clip .big:first-child { padding-left: 2px; }
.stack { display: flex; flex-direction: column; gap: 11px; padding-top: 1px; }
.stack span { display: flex; gap: 4px; align-items: center; }
.group.font, .group.para { padding-top: 1px; }
.font { padding-left: 6px; }
.frow1, .frow2, .prow1, .prow2 { display: grid; align-items: center; height: 30px; justify-items: start; }
.frow1 { grid-template-columns: 236px 30px 31px 33px 25px 7px; height: 29px; }
.combo { width: 229px; height: 29px; border: 1px solid #cfccc9; border-radius: 5px; display: grid; grid-template-columns: 124px 12px 74px 7px; align-items: center; padding-left: 6px; }
.size { border-left: 1px dotted #c1bdb9; padding-left: 4px; line-height: 27px; }
.pinyin { display: flex; flex-direction: column; align-items: center; font-size: 16px; line-height: 15px; }
.pinyin small { font-size: 8px; line-height: 8px; height: 6px; margin-top: -2px; }
.frow2 { grid-template-columns: 30px 27px 20px 16px 23px 17px 28px 32px 23px 16px 23px 17px 22px 17px 20px; padding-left: 8px; height: 31px; }
.g { font-size: 19px; line-height: 20px; }
.it { font-family: "Liberation Serif", serif; font-style: italic; font-size: 21px; padding-left: 2px; }
.un { border-bottom: 2px solid #c1bdb9; height: 19px; line-height: 18px; font-size: 18px; }
.ab { border-bottom: 4px solid #9a9da3; line-height: 16px; font-size: 17px; }
.color { border-bottom: 3px solid #5197ec; line-height: 17px; width: 17px; text-align: center; }
.shade { background: #dedbd8; width: 18px; text-align: center; font-size: 18px; }
.para { padding-left: 11px; }
.prow1 { grid-template-columns: 23px 16px 23px 19px 28px 32px 24px 19px 31px 24px 16px 20px; }
.prow2 { grid-template-columns: 29px 28px 25px 34px 29px 23px 18px 24px 16px 23px 9px; }
.on { background: #c1bdb9; border-radius: 4px; width: 28px; height: 28px; display: flex; align-items: center; justify-content: center; }
.styles { display: grid; grid-template-columns: 342px 74px; padding-left: 6px; }
.gallery { margin-top: -3px; height: 59px; border: 1px solid #cbc8c5; border-radius: 5px; display: grid; grid-template-columns: 81px 81px 81px 81px 16px; }
.style { display: grid; grid-template-rows: 35px 20px; justify-items: center; }
.style.sel { border: 2px solid #c1bdb9; border-radius: 4px; grid-template-rows: 33px 20px; }
.pv { width: 77px; overflow: hidden; line-height: 36px; }
.p0 { font-size: 15.5px; letter-spacing: -.3px; width: 75px; line-height: 31px; }
.p1, .p2 { font-family: "Liberation Sans", sans-serif; font-weight: 700; font-size: 32px; letter-spacing: -.9px; }
.p2 { font-size: 28px; letter-spacing: -.3px; }
.p3 { font-weight: 700; font-size: 23px; letter-spacing: -.9px; }
.scrolls { display: flex; flex-direction: column; justify-content: space-between; align-items: center; padding: 6px 0 5px; }
.tools { display: grid; grid-template-columns: 82px 71px; justify-items: center; }
.edit { display: grid; grid-template-columns: 90px 45px; justify-items: center; }

/* Page canvas */
.work { display: grid; grid-template-columns: 1588px 1fr; padding-left: 158px; background: #e4e2e0; }
.paper { background: #fafafa; padding: 137px 0 0 240px; font-size: 28px; box-shadow: 2px 0 0 #c6c3c0, -1px 0 0 #c6c3c0; font-weight: 300; overflow: hidden; }
.paper p { margin: 0; height: 41.8px; line-height: 42px; display: flex; }
.paper b { font-family: Carlito, Lato, sans-serif; font-size: 26px; font-weight: 600; line-height: 44px; }
.w70 { width: 70px; }
.w84 { width: 84px; }
.w112 { width: 112px; }
.paper .pw { margin-right: 29px; letter-spacing: .3px; flex: 0 0 84px; text-decoration: underline wavy #718096 1px; text-underline-offset: 4px; }
.lsw { width: 44px; }
.ibeam { width: 30px; height: 28px; margin: 8px 0 0 61px; }
.scroll { justify-self: end; width: 18px; display: flex; flex-direction: column; align-items: center; }
.top1 { height: 10px; margin-top: 6px; }
.top2 { margin-top: 15px; }
.thumb { width: 17px; height: 251px; margin-top: 291px; background: #fafafa; border: 1px solid #b2b0b0; border-radius: 8px; flex: none; }
.dn { margin: 179px 0 13px; flex: none; }
.nav { width: 8px; height: 10px; margin-bottom: 13px; }

/* Status bar */
.status { display: grid; align-items: center; border-bottom: 1px solid #718096; padding: 1px 0 0 9px;
  grid-template-columns: 52px 10px 67px 10px 61px 119px 13px 54px 45px 10px 61px 12px 23px 71px 11px 23px 70px 15px 23px 581px 31px 32px 28px 37px 31px 29px 34px 13px 43px 20px 30px 185px 32px 18px; }
.slider { width: 172px; height: 20px; }

/* Taskbar */
.taskbar { display: grid; align-items: center; background: #848e9b; border-top: 1px solid #a7abb0; color: #fafafa;
  grid-template-columns: 74px 55px 176px 56px 162px 162px 162px 587px 371px 77px 1fr; padding-left: 13px; font-size: 16px; }
.s36 { width: 36px; height: 36px; }
.s38 { width: 38px; height: 38px; }
.s40 { width: 40px; height: 38px; }
.s42 { width: 42px; height: 41px; }
.task { width: 158px; height: 46px; display: flex; align-items: center; gap: 5px; padding-left: 9px; overflow: hidden; border: 1px solid #dcdad8; border-radius: 3px; background: linear-gradient(172deg, #eceae9 0, #c1bdb9 30%, #8d949d 48%, #808b99 70%); }
.task.active { border-color: #fafafa; background: linear-gradient(175deg, #f5f4f4 0, #c1bdb9 45%, #c1bdb9 75%, #e0dedc); }
.rhce { margin-left: 2px; }
.task.ke { padding-left: 7px; gap: 2px; }
.tray { display: grid; align-items: center; grid-template-columns: 37px 30px 30px 31px 30px 31px 30px 29px 28px 31px 64px; }
.clock { display: flex; flex-direction: column; align-items: center; line-height: 22px; font-size: 15.5px; }
.peek { border-left: 1px solid #c1bdb9; background: #75839a; align-self: stretch; margin-left: 9px; }
```
